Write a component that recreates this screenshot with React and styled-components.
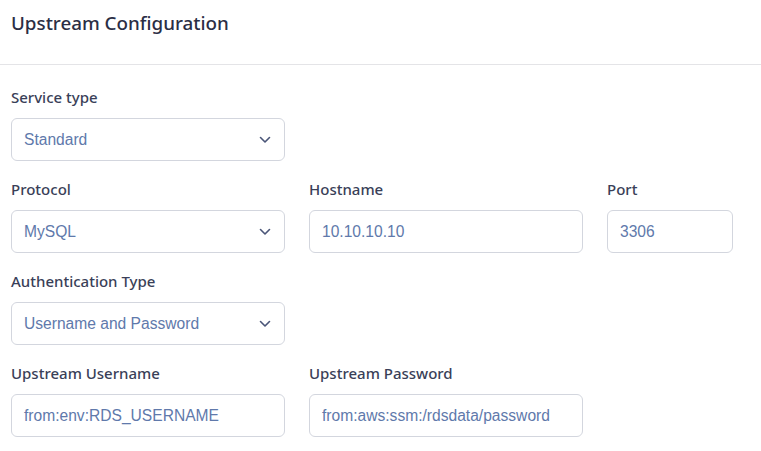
import React from 'react';
import styled, { createGlobalStyle } from 'styled-components';

const GlobalStyle = createGlobalStyle`
    body {
        margin: 0;
        background: #ffffff;
        font-family: "Noto Sans", "Liberation Sans", sans-serif;
    }
`;

const Panel = styled.div`
    width: 761px;
    height: 451px;
    background: #ffffff;
    overflow: hidden;
`;

const Header = styled.div`
    height: 65px;
    box-sizing: border-box;
    padding: 10px 11px 0;
    border-bottom: 1px solid #e4e4e7;
`;

const Title = styled.h2`
    margin: 0;
    font-size: 18.8px;
    line-height: 26px;
    font-weight: 500;
    color: #2b2e45;
`;

const Body = styled.div`
    padding: 22px 11px 0;
    display: flex;
    flex-direction: column;
    gap: 18px;
`;

const Row = styled.div`
    display: flex;
    gap: 24px;
`;

const Field = styled.div`
    display: flex;
    flex-direction: column;
    gap: 11px;
    width: ${props => props.width}px;
`;

const Label = styled.label`
    font-size: 15px;
    line-height: 20px;
    font-weight: 500;
    color: #3a3f58;
`;

const Box = styled.div`
    box-sizing: border-box;
    height: 43px;
    border: 1px solid #d3d6de;
    border-radius: 6px;
    padding: 0 13px 0 12px;
    display: flex;
    align-items: center;
    justify-content: space-between;
    font-family: "Liberation Sans", Arial, sans-serif;
    font-size: 15.6px;
    color: #6079ab;
`;

const Chevron = () => (
    <svg width="12" height="8" viewBox="0 0 12 8" fill="none">
        <path d="M1.5 1.5 L6 6 L10.5 1.5" stroke="#4a5578" strokeWidth="1.6" strokeLinecap="round" strokeLinejoin="round" />
    </svg>
);

const Input = ({ label, value, width = 274, select }) => (
    <Field width={width}>
        <Label>{label}</Label>
        <Box>
            <span>{value}</span>
            {select && <Chevron />}
        </Box>
    </Field>
);

export default function App() {
    return (
        <Panel>
            <GlobalStyle />
            <Header>
                <Title>Upstream Configuration</Title>
            </Header>
            <Body>
                <Row>
                    <Input label="Service type" value="Standard" select />
                </Row>
                <Row>
                    <Input label="Protocol" value="MySQL" select />
                    <Input label="Hostname" value="10.10.10.10" />
                    <Input label="Port" value="3306" width={126} />
                </Row>
                <Row>
                    <Input label="Authentication Type" value="Username and Password" select />
                </Row>
                <Row>
                    <Input label="Upstream Username" value="from:env:RDS_USERNAME" />
                    <Input label="Upstream Password" value="from:aws:ssm:/rdsdata/password" />
                </Row>
            </Body>
        </Panel>
    );
}
